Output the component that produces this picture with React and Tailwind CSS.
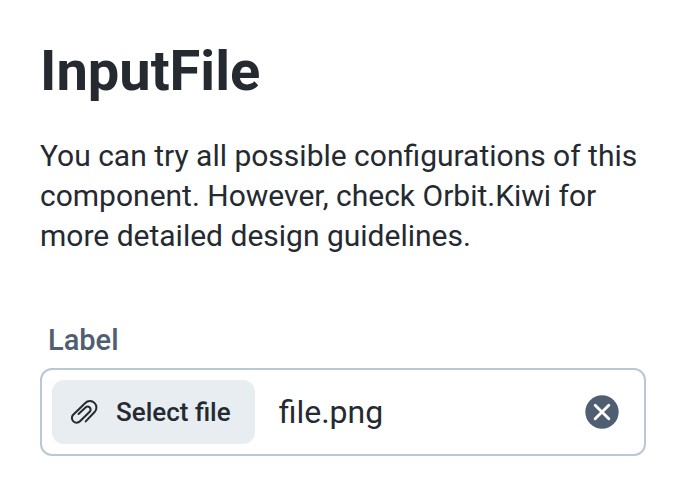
export default function App() {
  return (
    <main className="px-10 py-10 font-['Roboto',sans-serif] text-[#252a31]">
      <h1 className="text-[56px] leading-[62px] font-bold">InputFile</h1>
      <p className="mt-[34px] text-[30px] leading-10">
        You can try all possible configurations of this component. However, check Orbit.Kiwi for more detailed design guidelines.
      </p>
      <div className="mt-16">
        <label htmlFor="file-select" className="block px-2 pb-2 text-[29px] leading-10 font-medium text-[#4f5e71]">
          Label
        </label>
        <div className="flex h-[88px] items-center rounded-xl border-2 border-[#bac7d5] bg-white pr-[22px] pl-[10px]">
          <button id="file-select" type="button" className="flex h-16 shrink-0 items-center gap-4 rounded-xl bg-[#e8edf1] pr-6 pl-4 text-[26px] font-medium">
            <svg className="size-8" viewBox="0 0 32 32" fill="none" stroke="currentColor" strokeWidth="2" strokeLinecap="round" aria-hidden="true">
              <path d="M10.500 18 17.500 11.500A3 3 0 0 1 21.700 15.800L12 25.200A4.700 4.700 0 0 1 5.200 18.700L17.300 7A6.400 6.400 0 0 1 26.600 16L17.700 25.400" />
            </svg>
            Select file
          </button>
          <span className="min-w-0 flex-1 truncate px-6 text-[32px] leading-10">file.png</span>
          <button type="button" aria-label="Remove file" className="shrink-0 text-[#4f5e71]">
            <svg className="size-10" viewBox="0 0 24 24" aria-hidden="true">
              <circle cx="12" cy="12" r="10" fill="currentColor" />
              <path d="m7.900 7.900 8.200 8.200m0-8.200-8.200 8.200" stroke="white" strokeWidth="1.700" strokeLinecap="round" />
            </svg>
          </button>
        </div>
      </div>
    </main>
  );
}
